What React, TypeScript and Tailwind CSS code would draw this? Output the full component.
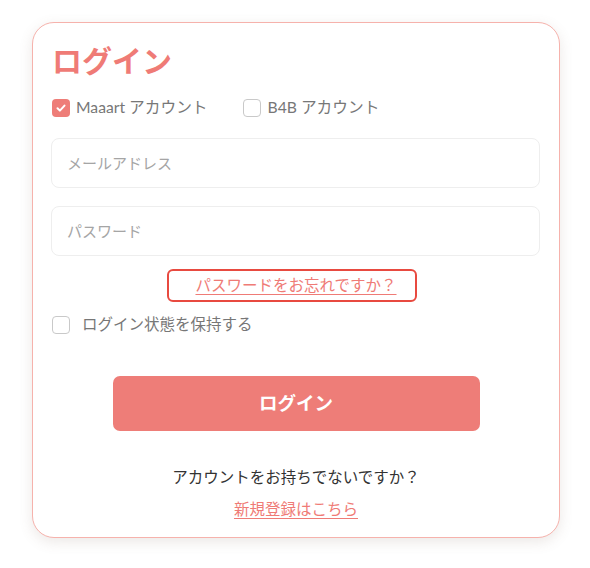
import { useState } from 'react';

const FONT = { fontFamily: 'Lato, "Noto Sans CJK JP", sans-serif' };

function Box({ checked, onClick }: { checked: boolean; onClick: () => void }) {
  return (
    <button
      type="button"
      onClick={onClick}
      className={
        checked
          ? 'flex h-[18px] w-[18px] items-center justify-center rounded-[4px] bg-[#ee7d78]'
          : 'h-[18px] w-[18px] rounded-[4px] border border-[#c9c9c9] bg-white'
      }
    >
      {checked && (
        <svg width="12" height="12" viewBox="0 0 12 12" fill="none">
          <path d="M2.5 6.2l2.4 2.4 4.6-5" stroke="white" strokeWidth="2" strokeLinecap="round" strokeLinejoin="round" />
        </svg>
      )}
    </button>
  );
}

export default function App() {
  const [account, setAccount] = useState<'maaart' | 'b4b'>('maaart');
  const [remember, setRemember] = useState(false);

  return (
    <div className="min-h-[568px] bg-white pl-[32px] pt-[22px]" style={FONT}>
      <div className="flex h-[516px] w-[528px] flex-col rounded-[22px] border border-[#f6b2ac] bg-white px-[18px] pt-[17px] shadow-[0_4px_14px_rgba(120,90,80,0.14)]">
        <h1 className="pl-[1px] text-[30px] font-bold leading-[40px] text-[#ef7b76]">ログイン</h1>

        <div className="mt-[16px] flex h-[24px] items-center pl-[1px] text-[15.7px] text-[#777]">
          <label className="flex items-center gap-[6px]">
            <Box checked={account === 'maaart'} onClick={() => setAccount('maaart')} />
            <span>Maaart アカウント</span>
          </label>
          <label className="ml-[35px] flex items-center gap-[7px]">
            <Box checked={account === 'b4b'} onClick={() => setAccount('b4b')} />
            <span>B4B アカウント</span>
          </label>
        </div>

        <input
          type="email"
          placeholder="メールアドレス"
          className="mt-[18px] h-[50px] w-[489px] rounded-[8px] border border-[#eeeeee] px-[15px] text-[15px] text-[#333] placeholder-[#a5a5a5] outline-none"
        />
        <input
          type="password"
          placeholder="パスワード"
          className="mt-[18px] h-[50px] w-[489px] rounded-[8px] border border-[#eeeeee] px-[15px] text-[15px] text-[#333] placeholder-[#a5a5a5] outline-none"
        />

        <div className="mt-[13px] flex justify-center pr-[8px]">
          <a
            href="#"
            className="flex h-[33px] w-[250px] items-center justify-center rounded-[6px] border-2 border-[#e84a40] text-[15.5px] text-[#ef7b76] underline underline-offset-[3px]"
          >
            <span className="pl-[8px]">パスワードをお忘れですか？</span>
          </a>
        </div>

        <label className="mt-[11px] flex h-[24px] items-center gap-[12px] pl-[1px] text-[15.5px] text-[#777]">
          <Box checked={remember} onClick={() => setRemember(!remember)} />
          <span>ログイン状態を保持する</span>
        </label>

        <div className="mt-[39px] flex justify-center">
          <button
            type="button"
            className="h-[55px] w-[367px] rounded-[7px] bg-[#ee7d78] text-[18.5px] font-bold text-white"
          >
            ログイン
          </button>
        </div>

        <p className="mt-[34px] text-center text-[15.5px] leading-[24px] text-[#333]">
          アカウントをお持ちでないですか？
        </p>
        <div className="mt-[8px] text-center text-[15.5px] leading-[24px]">
          <a href="#" className="text-[#ef7b76] underline underline-offset-[3px]">
            新規登録はこちら
          </a>
        </div>
      </div>
    </div>
  );
}
